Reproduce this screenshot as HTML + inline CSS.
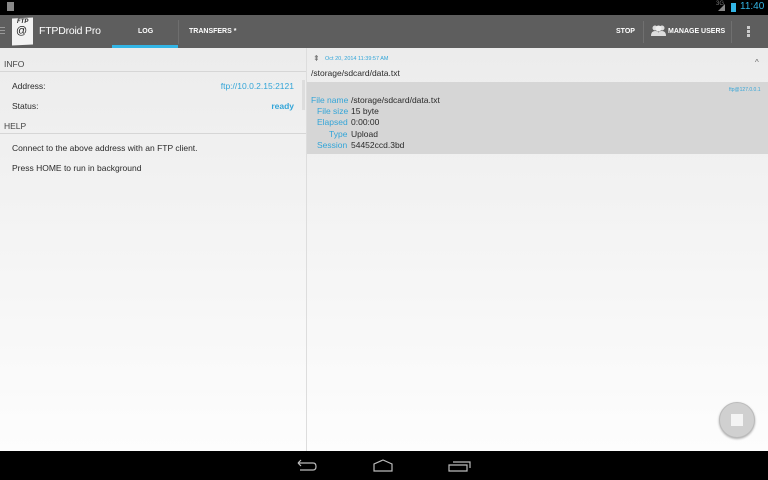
<!DOCTYPE html>
<html><head><style>
*{margin:0;padding:0;box-sizing:border-box}
body{width:768px;height:480px;overflow:hidden;font-family:"Liberation Sans",sans-serif;background:#fff;position:relative}
.abs{position:absolute}
.sb{left:0;top:0;width:768px;height:15px;background:#000}
.ab{left:0;top:15px;width:768px;height:33px;background:#5e5e5e}
.content{left:0;top:48px;width:768px;height:403px;background:linear-gradient(#ececec,#fdfdfd)}
.nav{left:0;top:451px;width:768px;height:29px;background:#000}
.t{position:absolute;white-space:nowrap}
.w{color:#fff;font-size:7px;font-weight:bold}
.g{color:#2a2a2a;font-size:8.5px}
.b{color:#33a5d8}
</style></head><body>
<div class="abs sb"></div>
<div class="abs" style="left:7px;top:2px;width:7px;height:9px;background:#888"></div>
<div class="t" style="left:716px;top:1px;font-size:6px;color:#777">3G</div>
<div class="abs" style="left:718px;top:4px;width:0;height:0;border-left:7px solid transparent;border-bottom:7px solid #888"></div>
<div class="abs" style="left:731px;top:3px;width:5px;height:9px;background:#33b5e5"></div>
<div class="t" style="left:740px;top:1px;font-size:10px;color:#33b5e5">11:40</div>

<div class="abs ab"></div>
<div class="abs" style="left:0;top:27px;width:5px;height:1px;background:#999;box-shadow:0 3px #999,0 6px #999"></div>
<div class="abs" style="left:12px;top:18px;width:21px;height:27px;background:#f2f2f2;transform:skewY(-3deg)"></div>
<div class="t" style="left:17px;top:19px;font-size:6px;font-style:italic;font-weight:bold;color:#222">FTP</div>
<div class="t" style="left:16px;top:25px;font-size:11px;color:#222">@</div>
<div class="t" style="left:39px;top:25px;font-size:10.5px;color:#fff;letter-spacing:-0.2px">FTPDroid Pro</div>
<div class="t w" style="left:138px;top:28px">LOG</div>
<div class="abs" style="left:112px;top:45px;width:66px;height:3px;background:#33b5e5"></div>
<div class="abs" style="left:178px;top:20px;width:1px;height:24px;background:#6e6e6e"></div>
<div class="t w" style="left:189px;top:28px">TRANSFERS *</div>
<div class="t w" style="left:616px;top:28px">STOP</div>
<div class="abs" style="left:643px;top:21px;width:1px;height:22px;background:#707070"></div>
<svg class="abs" style="left:650px;top:25px" width="17" height="11"><circle cx="5" cy="3" r="2.5" fill="#ddd"/><circle cx="12" cy="3" r="2.5" fill="#ddd"/><circle cx="8.5" cy="3.5" r="3" fill="#eee"/><path d="M1 11Q1 6 5 6 8.5 6 8.5 8 8.5 6 12 6 16 6 16 11Z" fill="#ddd"/></svg>
<div class="t w" style="left:668px;top:28px">MANAGE USERS</div>
<div class="abs" style="left:731px;top:21px;width:1px;height:22px;background:#707070"></div>
<div class="abs" style="left:747px;top:26px;width:3px;height:3px;background:#ccc;box-shadow:0 4px #ccc,0 8px #ccc"></div>

<div class="abs content"></div>
<div class="abs" style="left:306px;top:48px;width:1px;height:403px;background:#ddd"></div>
<div class="abs" style="left:302px;top:80px;width:3px;height:30px;background:#ddd"></div>
<div class="t g" style="left:4px;top:59px;color:#444">INFO</div>
<div class="abs" style="left:0;top:71px;width:306px;height:1px;background:#d6d6d6"></div>
<div class="t g" style="left:12px;top:81px">Address:</div>
<div class="t g b" style="right:474px;top:81px">ftp://10.0.2.15:2121</div>
<div class="t g" style="left:12px;top:101px">Status:</div>
<div class="t g b" style="right:474px;top:101px;font-weight:bold">ready</div>
<div class="t g" style="left:4px;top:121px;color:#444">HELP</div>
<div class="abs" style="left:0;top:133px;width:306px;height:1px;background:#d6d6d6"></div>
<div class="t g" style="left:12px;top:143px">Connect to the above address with an FTP client.</div>
<div class="t g" style="left:12px;top:163px">Press HOME to run in background</div>

<div class="t" style="left:313px;top:54px;font-size:8px;color:#666">⇞</div>
<div class="t b" style="left:325px;top:56px;font-size:5.5px">Oct 20, 2014 11:39:57 AM</div>
<div class="t g" style="left:311px;top:68px">/storage/sdcard/data.txt</div>
<div class="t" style="left:755px;top:58px;font-size:8px;color:#666">^</div>
<div class="abs" style="left:307px;top:82px;width:461px;height:72px;background:#d6d6d6"></div>
<div class="t b" style="left:729px;top:87px;font-size:5px">ftp@127.0.0.1</div>
<div class="t g b" style="left:311px;top:95px">File name</div><div class="t g" style="left:351px;top:95px">/storage/sdcard/data.txt</div>
<div class="t g b" style="left:317px;top:106px">File size</div><div class="t g" style="left:351px;top:106px">15 byte</div>
<div class="t g b" style="left:317px;top:117px">Elapsed</div><div class="t g" style="left:351px;top:117px">0:00:00</div>
<div class="t g b" style="left:329px;top:129px">Type</div><div class="t g" style="left:351px;top:129px">Upload</div>
<div class="t g b" style="left:317px;top:140px">Session</div><div class="t g" style="left:351px;top:140px">54452ccd.3bd</div>

<div class="abs" style="left:719px;top:402px;width:36px;height:36px;border-radius:50%;background:#d0d0d0;border:1px solid #bbb;box-shadow:0 1px 2px #aaa"></div>
<div class="abs" style="left:731px;top:414px;width:12px;height:12px;background:#f4f4f4"></div>

<div class="abs nav"></div>
<svg class="abs" style="left:295px;top:459px" width="180" height="14" fill="none" stroke="#bbb" stroke-width="1.2">
<path d="M3 4H18Q21 4 21 7.5 21 11 18 11H5M3 4L6 1M3 4L6 7"/>
<path d="M79 12V5L88 1 97 5V12Z"/>
<path d="M154 6H172V12H154ZM158 3H175V9"/>
</svg>
</body></html>
